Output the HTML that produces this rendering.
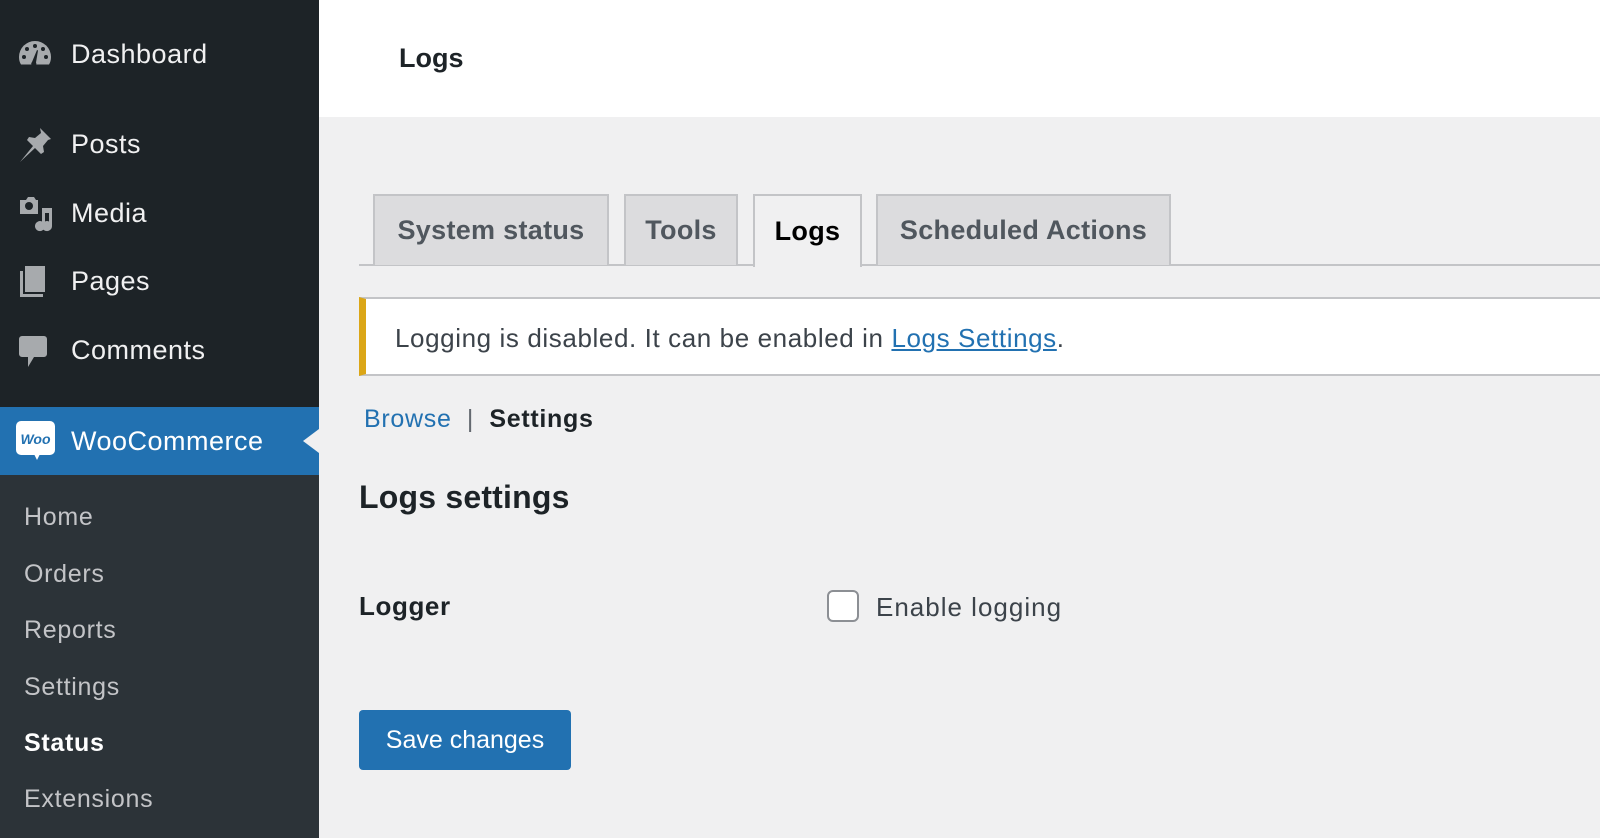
<!DOCTYPE html>
<html><head><meta charset="utf-8"><style>
*{margin:0;padding:0;box-sizing:border-box}
body{width:1600px;height:838px;overflow:hidden;background:#f0f0f1;font-family:"Liberation Sans",Arial,sans-serif;position:relative}
.a{position:absolute;white-space:nowrap}
#side{left:0;top:0;width:319px;height:838px;background:#1d2327}
#sub{left:0;top:475px;width:319px;height:363px;background:#2c3338}
.mi{color:#f0f0f1;font-size:27px;left:71px;line-height:1;letter-spacing:.5px}
.si{color:#c3c4c7;font-size:25px;left:24px;line-height:1;letter-spacing:.7px}
.ic{left:18px;fill:#a7aaad}
.tab{top:194px;height:71px;border:2px solid #c3c4c7;border-bottom:none;background:#dcdcde;color:#50575e;font-weight:bold;font-size:27px;display:flex;align-items:center;justify-content:center;letter-spacing:.3px}
</style></head><body>
<div class="a" id="side"></div>
<div class="a" id="sub"></div>
<div class="a" style="left:0;top:407px;width:319px;height:68px;background:#2271b1"></div>
<div class="a" style="left:303px;top:429px;width:0;height:0;border-top:12px solid transparent;border-bottom:12px solid transparent;border-right:16px solid #f0f0f1"></div>

<svg class="a ic" style="top:40px" width="34" height="28" viewBox="0 0 34 28"><path d="M17 1A16 16 0 0 0 1 17c0 3 .7 5.5 2 7.5h28c1.3-2 2-4.5 2-7.5A16 16 0 0 0 17 1z"/><g fill="#1d2327"><circle cx="17" cy="6" r="2"/><circle cx="9" cy="9" r="2"/><circle cx="25" cy="9" r="2"/><circle cx="6" cy="17" r="2"/><circle cx="28" cy="17" r="2"/><path d="M14 22l5-12 1 .5-2 12a2.5 2.5 0 1 1-4-.5z"/></g></svg>
<div class="a mi" style="top:41px">Dashboard</div>
<svg class="a ic" style="top:127px" width="34" height="36" viewBox="0 0 34 36"><path d="M22 1l11 11-3 1-5 6 1 6-3 2-6-6-15 14 13-16-6-6 2-3 6 1 6-5z"/></svg>
<div class="a mi" style="top:131px">Posts</div>
<svg class="a ic" style="top:196px" width="36" height="36" viewBox="0 0 36 36"><path d="M2 4h6l2-3h6l2 3h2v14H2z"/><circle cx="11" cy="10" r="4" fill="#1d2327"/><path d="M24 12h10v18a5 5 0 1 1-3-4.5V17h-4v13a5 5 0 1 1-3-4.5z"/></svg>
<div class="a mi" style="top:200px">Media</div>
<svg class="a ic" style="top:265px" width="30" height="34" viewBox="0 0 30 34"><path d="M7 1h20v26H7z"/><path d="M2 6h3v23h20v3H2z"/></svg>
<div class="a mi" style="top:268px">Pages</div>
<svg class="a ic" style="top:335px" width="30" height="34" viewBox="0 0 30 34"><path d="M4 1h22a3 3 0 0 1 3 3v15a3 3 0 0 1-3 3H16l-6 10v-10H4a3 3 0 0 1-3-3V4a3 3 0 0 1 3-3z"/></svg>
<div class="a mi" style="top:337px">Comments</div>
<svg class="a" style="left:16px;top:421px" width="39" height="40" viewBox="0 0 39 40"><rect x="0" y="0" width="39" height="34" rx="5" fill="#fff"/><path d="M18 33l3 6 3-6z" fill="#fff"/><text x="19.5" y="23" font-family="Liberation Sans,sans-serif" font-size="14" font-weight="bold" font-style="italic" fill="#2271b1" text-anchor="middle">Woo</text></svg>
<div class="a mi" style="top:428px;color:#fff">WooCommerce</div>

<div class="a si" style="top:505px">Home</div>
<div class="a si" style="top:562px">Orders</div>
<div class="a si" style="top:618px">Reports</div>
<div class="a si" style="top:675px">Settings</div>
<div class="a si" style="top:731px;color:#fff;font-weight:bold">Status</div>
<div class="a si" style="top:787px">Extensions</div>

<div class="a" style="left:319px;top:0;width:1281px;height:117px;background:#fff"></div>
<div class="a" style="left:399px;top:43px;font-size:27px;font-weight:bold;color:#1d2327">Logs</div>

<div class="a" style="left:359px;top:264px;width:1241px;height:2px;background:#c3c4c7"></div>
<div class="a tab" style="left:373px;width:236px">System status</div>
<div class="a tab" style="left:624px;width:114px">Tools</div>
<div class="a tab" style="left:753px;width:109px;background:#f0f0f1;color:#000;height:73px">Logs</div>
<div class="a tab" style="left:876px;width:295px">Scheduled Actions</div>

<div class="a" style="left:359px;top:297px;width:1241px;height:79px;background:#fff;border:2px solid #c3c4c7;border-left:7px solid #dba617;border-right:none"></div>
<div class="a" style="left:395px;top:323px;font-size:26px;letter-spacing:.6px;color:#3c434a">Logging is disabled. It can be enabled in <span style="color:#2271b1;text-decoration:underline">Logs Settings</span>.</div>

<div class="a" style="left:364px;top:405px;font-size:25px;letter-spacing:.7px;color:#2271b1">Browse <span style="color:#646970">&nbsp;|&nbsp;</span> <span style="color:#1d2327;font-weight:bold">Settings</span></div>
<div class="a" style="left:359px;top:479px;font-size:32px;font-weight:bold;color:#1d2327;letter-spacing:.2px">Logs settings</div>
<div class="a" style="left:359px;top:591px;font-size:26px;font-weight:bold;color:#1d2327;letter-spacing:.6px">Logger</div>
<div class="a" style="left:827px;top:590px;width:32px;height:32px;border:2px solid #8c8f94;border-radius:6px;background:#fff"></div>
<div class="a" style="left:876px;top:592px;font-size:26px;letter-spacing:1px;color:#3c434a">Enable logging</div>
<div class="a" style="left:359px;top:710px;width:212px;height:60px;background:#2271b1;border-radius:4px;color:#fff;font-size:25px;display:flex;align-items:center;justify-content:center">Save changes</div>
</body></html>
